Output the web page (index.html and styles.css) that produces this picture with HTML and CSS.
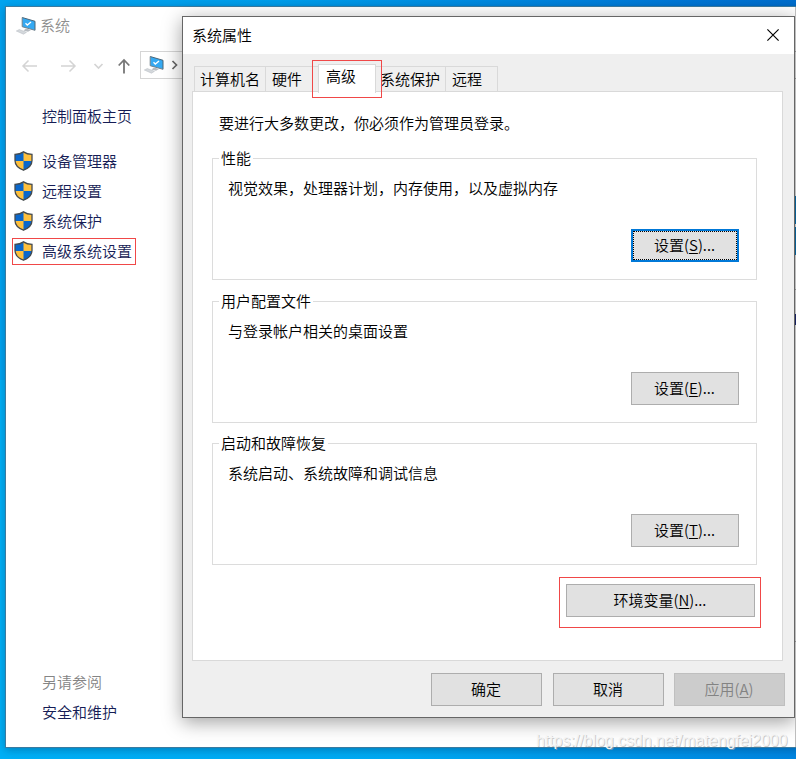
FILE: index.html
```html
<!DOCTYPE html>
<html lang="zh-CN">
<head>
<meta charset="utf-8">
<title>系统属性</title>
<link rel="stylesheet" href="styles.css">
</head>
<body>
<svg class="defs" width="0" height="0" aria-hidden="true">
  <symbol id="shield" viewBox="0 0 19 20">
    <path d="M9.5 .7C7.3 2.3 4.300 3.100 1 3.200V9.500C1 14.200 4.600 17.300 9.500 19.300 14.400 17.300 18 14.200 18 9.500V3.200C14.700 3.100 11.700 2.300 9.500 .7Z" fill="#ffc03c"/>
    <path d="M9.500 .7C7.300 2.300 4.300 3.100 1 3.200V10H9.500ZM9.500 10H18C17.800 14.400 14.300 17.300 9.500 19.300Z" fill="#0a67cb"/>
    <path d="M9.500 .9C7.300 2.400 4.300 3.300 1 3.400V9.500C1 14.200 4.600 17.300 9.500 19.200 14.400 17.300 18 14.200 18 9.500V3.400C14.700 3.300 11.700 2.400 9.500 .9Z" fill="none" stroke="#454b50" stroke-width="1.300"/>
  </symbol>
  <symbol id="pc" viewBox="0 0 20 18">
    <path d="M6.200 .5 19 4.300V13.300L6.200 9.700Z" fill="#35a9f2"/>
    <path d="M6.200 .5 19 4.300V13.300" fill="none" stroke="#4b6678"/>
    <path d="M6.200 .5V9.700L19 13.300" fill="none" stroke="#73818b"/>
    <path d="M9.500 6.200 11.300 8 15 4.900" fill="none" stroke="#fff" stroke-width="1.300"/>
    <path d="M10 11.500 15 13 12 14.800 7.500 13.500Z" fill="#b6bbc0"/>
    <path d="M.3 14 3.300 12.500 10.500 15.300 7.500 17.200Z" fill="#d4d8dc" stroke="#b4bac0" stroke-width=".5"/>
  </symbol>
</svg>

<main class="window">
  <header class="window-title"><svg class="pc"><use href="#pc"/></svg><span>系统</span></header>
  <nav class="toolbar">
    <svg class="nav-icons" viewBox="0 0 120 28" fill="none">
      <g stroke="#d4d4d4" stroke-width="1.500">
        <path d="M31 15H17M22.500 9.500 17 15 22.500 20.500"/>
        <path d="M55 15H69M63.500 9.500 69 15 63.500 20.500"/>
        <path d="M88.500 13 92.500 17 96.500 13" stroke-width="1.700"/>
      </g>
      <path d="M118 22.500V9M112.700 14.500 118 9 123.300 14.500" stroke="#777" stroke-width="1.800"/>
    </svg>
    <div class="address">
      <svg class="pc"><use href="#pc"/></svg>
      <svg class="chevron" viewBox="0 0 8 10"><path d="M1.500 1 5.500 5 1.500 9" fill="none" stroke="#666" stroke-width="1.700"/></svg>
    </div>
  </nav>
  <aside class="sidebar">
    <a class="home">控制面板主页</a>
    <a class="task"><svg class="shield"><use href="#shield"/></svg>设备管理器</a>
    <a class="task"><svg class="shield"><use href="#shield"/></svg>远程设置</a>
    <a class="task"><svg class="shield"><use href="#shield"/></svg>系统保护</a>
    <a class="task marked"><svg class="shield"><use href="#shield"/></svg>高级系统设置</a>
    <div class="related">
      <span class="muted">另请参阅</span>
      <a>安全和维护</a>
    </div>
  </aside>
</main>

<div class="edge" aria-hidden="true"><i class="rule r1"></i><i class="rule r2"></i><i class="logo"></i><i class="logo"></i><i class="rule r3"></i><i class="glyph"></i><i class="rule r4"></i></div>

<section class="dialog">
  <header class="dialog-title">
    <span>系统属性</span>
    <svg class="close" viewBox="0 0 12 12"><path d="M.4 .4 11.600 11.600M11.600 .4 .4 11.600" stroke="#000" stroke-width="1.150"/></svg>
  </header>
  <div class="tabs">
    <div class="tab name">计算机名</div>
    <div class="tab hardware">硬件</div>
    <div class="tab active">高级</div>
    <div class="tab protect">系统保护</div>
    <div class="tab remote">远程</div>
    <i class="tab-mark"></i>
  </div>
  <div class="panel">
    <p class="intro">要进行大多数更改，你必须作为管理员登录。</p>
    <div class="group">
      <span class="legend">性能</span>
      <p>视觉效果，处理器计划，内存使用，以及虚拟内存</p>
      <button class="focused">设置(<u>S</u>)...</button>
    </div>
    <div class="group">
      <span class="legend">用户配置文件</span>
      <p>与登录帐户相关的桌面设置</p>
      <button>设置(<u>E</u>)...</button>
    </div>
    <div class="group last">
      <span class="legend">启动和故障恢复</span>
      <p>系统启动、系统故障和调试信息</p>
      <button>设置(<u>T</u>)...</button>
    </div>
    <div class="env"><button>环境变量(<u>N</u>)...</button></div>
  </div>
  <footer class="actions">
    <button>确定</button>
    <button>取消</button>
    <button class="disabled">应用(<u>A</u>)</button>
  </footer>
</section>
<div class="watermark">https://blog.csdn.net/matengfei2000</div>
</body>
</html>
```
FILE: styles.css
```css
* { box-sizing: border-box; }

body {
  position: relative;
  width: 796px;
  height: 759px;
  margin: 0;
  padding: 6px 0 0 5px;
  overflow: hidden;
  font: 15px/20px "Noto Sans CJK SC", sans-serif;
  font-weight: 350;
  color: #000;
  background: linear-gradient(90deg, #00a4f0 0%, #009fec 35%, #0078d7 85%, #006fce 100%) top / 100% 380px no-repeat,
              linear-gradient(90deg, #00b0f6 0%, #00a9f2 50%, #0085e0 100%);
}

p { margin: 0; }
svg { display: block; flex: none; }
.defs { position: absolute; }

.window {
  width: 800px;
  height: 742px;
  border: 1px solid #3b7ba0;
  background: #fff;
  box-shadow: 0 2px 8px rgba(0, 40, 80, .35);
}

.window-title {
  display: flex;
  height: 44px;
  padding: 8px 0 0 10px;
  gap: 4px;
  color: #8f8f8f;
}
.pc { width: 20px; height: 18px; }
.window-title .pc { margin-top: 2px; }

.toolbar { display: flex; height: 28px; }
.nav-icons { width: 120px; height: 28px; overflow: visible; }
.address {
  display: flex;
  width: 300px;
  margin-left: 14px;
  padding: 4px 0 0 3px;
  border: 1px solid #d5d5d5;
}
.chevron { width: 8px; height: 10px; margin: 4px 0 0 7px; }

.sidebar {
  display: flex;
  flex-direction: column;
  width: 177px;
  padding-top: 27px;
  color: #151c55;
}
.home { height: 42px; padding-left: 36px; }
.task {
  display: flex;
  width: 124px;
  height: 27px;
  margin: 0 0 3px 6px;
  padding: 3px 0 0 2px;
  gap: 9px;
  white-space: nowrap;
}
.shield { width: 19px; height: 20px; }
.marked { border: 1px solid #f04848; padding: 2px 0 0 1px; }
.related {
  display: flex;
  flex-direction: column;
  gap: 10px;
  margin-top: 404px;
  padding-left: 36px;
}
.muted { color: #858585; }

/* Strip of the background window visible beside the dialog */
.edge {
  position: absolute;
  z-index: 1;
  top: 7px;
  left: 795px;
  width: 1px;
  height: 740px;
  background: #bdbdbd;
}
.edge i { display: block; height: 1px; background: #888; }
.edge .r1 { margin-top: 44px; }
.edge .r2 { margin-top: 26px; }
.edge .logo { height: 28px; margin-top: 3px; background: #075d91; }
.edge .r2 + .logo { margin-top: 117px; }
.edge .r3 { margin-top: 34px; }
.edge .glyph { height: 11px; margin-top: 24px; background: #16205e; }
.edge .r4 { margin-top: 316px; }

.dialog {
  position: absolute;
  top: 16px;
  left: 182px;
  width: 613px;
  height: 702px;
  border: 1px solid #666;
  background: #efefef;
  box-shadow: 0 4px 18px rgba(0, 0, 0, .38);
}
.dialog-title {
  display: flex;
  justify-content: space-between;
  height: 37px;
  padding: 8px 15px 0 9px;
  background: #fff;
}
.close { width: 12px; height: 12px; margin-top: 4px; }

.tabs {
  position: relative;
  display: flex;
  align-items: flex-end;
  height: 38px;
  padding-left: 11px;
}
.tab {
  height: 26px;
  padding-top: 2px;
  border: 1px solid #d9d9d9;
  border-width: 1px 0 0 1px;
  white-space: nowrap;
}
.name { width: 71px; padding-left: 5px; }
.hardware { width: 53px; padding-left: 6px; }
.active {
  position: relative;
  z-index: 1;
  width: 58px;
  height: 29px;
  margin: 0 1px -1px -1px;
  border-width: 1px 1px 0;
  padding: 2px 0 0 8px;
  background: #fff;
}
.active { margin: 0 0 -1px; padding: 1px 0 0 7px; }
.protect { width: 69px; padding-left: 4px; border-left: 0; }
.remote { width: 53px; padding-left: 6px; border-right-width: 1px; }
.tab-mark {
  position: absolute;
  z-index: 2;
  top: 6px;
  left: 129px;
  width: 70px;
  height: 38px;
  border: 1px solid #f04848;
}

.panel {
  display: flex;
  flex-direction: column;
  width: 591px;
  height: 570px;
  margin: -1px 0 0 9px;
  padding: 21px 25px 0 19px;
  border: 1px solid #d9d9d9;
  background: #fff;
}
.intro { height: 45px; padding-left: 7px; }
.group {
  display: flex;
  flex-direction: column;
  align-items: flex-start;
  height: 122px;
  margin-bottom: 21px;
  padding: 0 17px 17px 15px;
  border: 1px solid #dcdcdc;
}
.group:nth-of-type(2) { margin-bottom: 20px; }
.legend {
  height: 20px;
  margin: -11px 0 0 -9px;
  padding: 0 2px;
  background: #fff;
}
.group p { margin-top: 10px; }

button {
  height: 33px;
  padding: 0 1px 2px 0;
  border: 1px solid #adadad;
  border-radius: 0;
  background: #e1e1e1;
  font: inherit;
  color: #000;
}
u { text-underline-offset: 2px; text-decoration-thickness: 1px; }
.group button { width: 108px; margin: auto 0 0; align-self: flex-end; }
button.focused { border: 2px solid #0078d7; outline: 1px dotted #000; outline-offset: -3px; }

.env {
  align-self: flex-end;
  width: 202px;
  height: 51px;
  margin: -9px -4px 0 0;
  padding: 6px;
  border: 1px solid #f04848;
}
.env button { display: block; width: 189px; }

.actions { display: flex; margin: 12px 0 0 248px; gap: 11px; }
.actions button { width: 111px; }
.actions button + button + button { margin-left: -1px; }
.actions .disabled { border-color: #bfbfbf; background: #ccc; color: #838383; }

.watermark {
  position: absolute;
  top: 731px;
  left: 536px;
  font: 16px/20px "Liberation Sans", sans-serif;
  letter-spacing: -.06px;
  white-space: nowrap;
  color: #f4f4f4;
  text-shadow: 1px 1px 0 rgba(170, 170, 170, .6);
}
```
